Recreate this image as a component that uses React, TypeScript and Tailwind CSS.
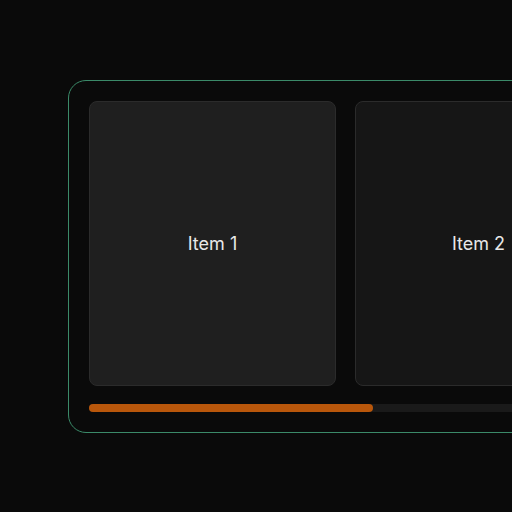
export default function App() {
  const items = ['Item 1', 'Item 2', 'Item 3']
  return (
    <div
      className="h-[512px] w-[512px] overflow-hidden bg-[#0a0a0a] pl-[68px] pt-[80px]"
      style={{ fontFamily: 'Inter, "Liberation Sans", sans-serif' }}
    >
      <div className="w-[600px] rounded-[18px] border border-[#3b8a69] p-5">
        <div className="flex gap-[19px]">
          {items.map((label, i) => (
            <div
              key={label}
              className={
                'flex h-[285px] w-[247px] shrink-0 items-center justify-center rounded-lg border border-[#2b2b2b] text-[18px] text-[#e8e8e8] ' +
                (i === 0 ? 'bg-[#1f1f1f]' : 'bg-[#161616]')
              }
            >
              {label}
            </div>
          ))}
        </div>
        <div className="mt-[18px] h-2 w-full rounded-full bg-[#1a1a1a]">
          <div className="h-2 w-[284px] rounded-full bg-[#b9570b]" />
        </div>
      </div>
    </div>
  )
}
